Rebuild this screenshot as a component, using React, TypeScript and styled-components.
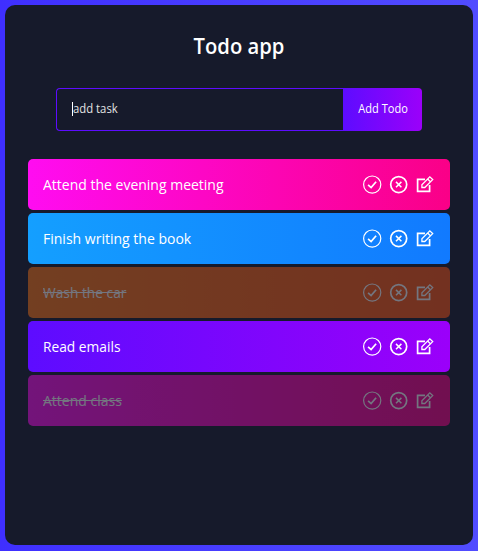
import React from 'react';
import styled, { createGlobalStyle } from 'styled-components';

const fontStack = "'Trebuchet MS', 'Open Sans', 'Noto Sans', sans-serif";

const GlobalStyle = createGlobalStyle`
  * { box-sizing: border-box; margin: 0; padding: 0; }
  body {
    height: 551px;
    overflow: hidden;
    background: linear-gradient(90deg, #3f2fff 0%, #514cff 100%);
    font-family: ${fontStack};
  }
`;

const Page = styled.div`
  height: 551px;
  padding: 5px 5px 6px;
`;

const Panel = styled.main`
  height: 540px;
  padding: 26px 23px 0;
  background: #161a2b;
  border-radius: 10px;
`;

const Title = styled.h1`
  height: 28px;
  line-height: 28px;
  text-align: center;
  color: #fff;
  font-size: 22px;
  font-weight: 600;
  transform: scaleX(0.918);
`;

const Form = styled.form`
  display: flex;
  width: 366px;
  height: 43px;
  margin: 29px 28px 28px;
`;

const Field = styled.div`
  display: flex;
  align-items: center;
  width: 287px;
  padding: 0 0 3px 15px;
  border: 1px solid #5d0cff;
  border-right: 0;
  border-radius: 4px 0 0 4px;
  color: #e2e2e2;
  font-size: 13px;
`;

const Caret = styled.span`
  width: 1px;
  height: 14px;
  margin-top: 1px;
  background: #fff;
`;

const AddButton = styled.button`
  width: 79px;
  border: 0;
  padding: 0 0 3px 2px;
  border-radius: 0 4px 4px 0;
  background: linear-gradient(90deg, #5d0cff 0%, #9b00fa 100%);
  color: #fff;
  font-family: ${fontStack};
  font-size: 13px;
  white-space: nowrap;
`;

const CondensedText = styled.span<{ $scale: number; $center?: boolean }>`
  display: inline-block;
  transform: scaleX(${(p) => p.$scale});
  transform-origin: ${(p) => (p.$center ? 'center' : 'left')};
`;

const List = styled.ul`
  display: flex;
  flex-direction: column;
  gap: 3px;
  list-style: none;
`;

const Row = styled.li<{ $from: string; $to: string; $done?: boolean }>`
  display: flex;
  align-items: center;
  justify-content: space-between;
  height: 51px;
  padding: 0 16px 0 15px;
  border-radius: 5px;
  color: #fff;
  background: linear-gradient(90deg, ${(p) => p.$from} 0%, ${(p) => p.$to} 100%);
  opacity: ${(p) => (p.$done ? 0.4 : 1)};
`;

const Label = styled(CondensedText)<{ $done: boolean }>`
  font-size: 15px;
  line-height: 20px;
  padding-bottom: 1px;
  text-decoration: ${(p) => (p.$done ? 'line-through' : 'none')};
`;

const Actions = styled.div`
  display: flex;
  gap: 6px;

  svg {
    display: block;
    fill: none;
    stroke: currentColor;
  }
`;

const CheckIcon = () => (
  <svg width="20" height="20" viewBox="0 0 20 20">
    <circle cx="10.2" cy="9.6" r="8.6" strokeWidth="1.2" />
    <path d="M6.1 9.8 9.1 12.6 14.1 6.7" strokeWidth="1.7" />
  </svg>
);

const CloseIcon = () => (
  <svg width="20" height="20" viewBox="0 0 20 20">
    <circle cx="10.7" cy="9.6" r="8" strokeWidth="1.7" />
    <path d="m8 6.9 5.4 5.4m0-5.4-5.4 5.4" strokeWidth="1.5" />
  </svg>
);

const EditIcon = () => (
  <svg width="20" height="20" viewBox="0 0 20 20">
    <path d="M11 4.3H3.6v12.1h12V10" strokeWidth="1.7" />
    <path d="M7.9 9.7v2.8h2.9l7.9-7.9L15.8 1.8ZM13.6 4l2.8 2.8" strokeWidth="1.3" />
  </svg>
);

const todos = [
  { text: 'Attend the evening meeting', from: '#ff0cf1', to: '#fa0087', scale: 0.933, done: false },
  { text: 'Finish writing the book', from: '#149fff', to: '#117aff', scale: 0.934, done: false },
  { text: 'Wash the car', from: '#ff7614', to: '#ff5411', scale: 0.917, done: true },
  { text: 'Read emails', from: '#5d0cff', to: '#9b00fa', scale: 0.917, done: false },
  { text: 'Attend class', from: '#ff0cf1', to: '#fa0087', scale: 0.934, done: true },
];

export default function App() {
  return (
    <Page>
      <GlobalStyle />
      <Panel>
        <Title>Todo app</Title>
        <Form>
          <Field>
            <Caret />
            <CondensedText $scale={0.87}>add task</CondensedText>
          </Field>
          <AddButton type="button">
            <CondensedText $scale={0.85} $center>Add Todo</CondensedText>
          </AddButton>
        </Form>
        <List>
          {todos.map((todo) => (
            <Row key={todo.text} $from={todo.from} $to={todo.to} $done={todo.done}>
              <Label $scale={todo.scale} $done={todo.done}>{todo.text}</Label>
              <Actions>
                <CheckIcon />
                <CloseIcon />
                <EditIcon />
              </Actions>
            </Row>
          ))}
        </List>
      </Panel>
    </Page>
  );
}
